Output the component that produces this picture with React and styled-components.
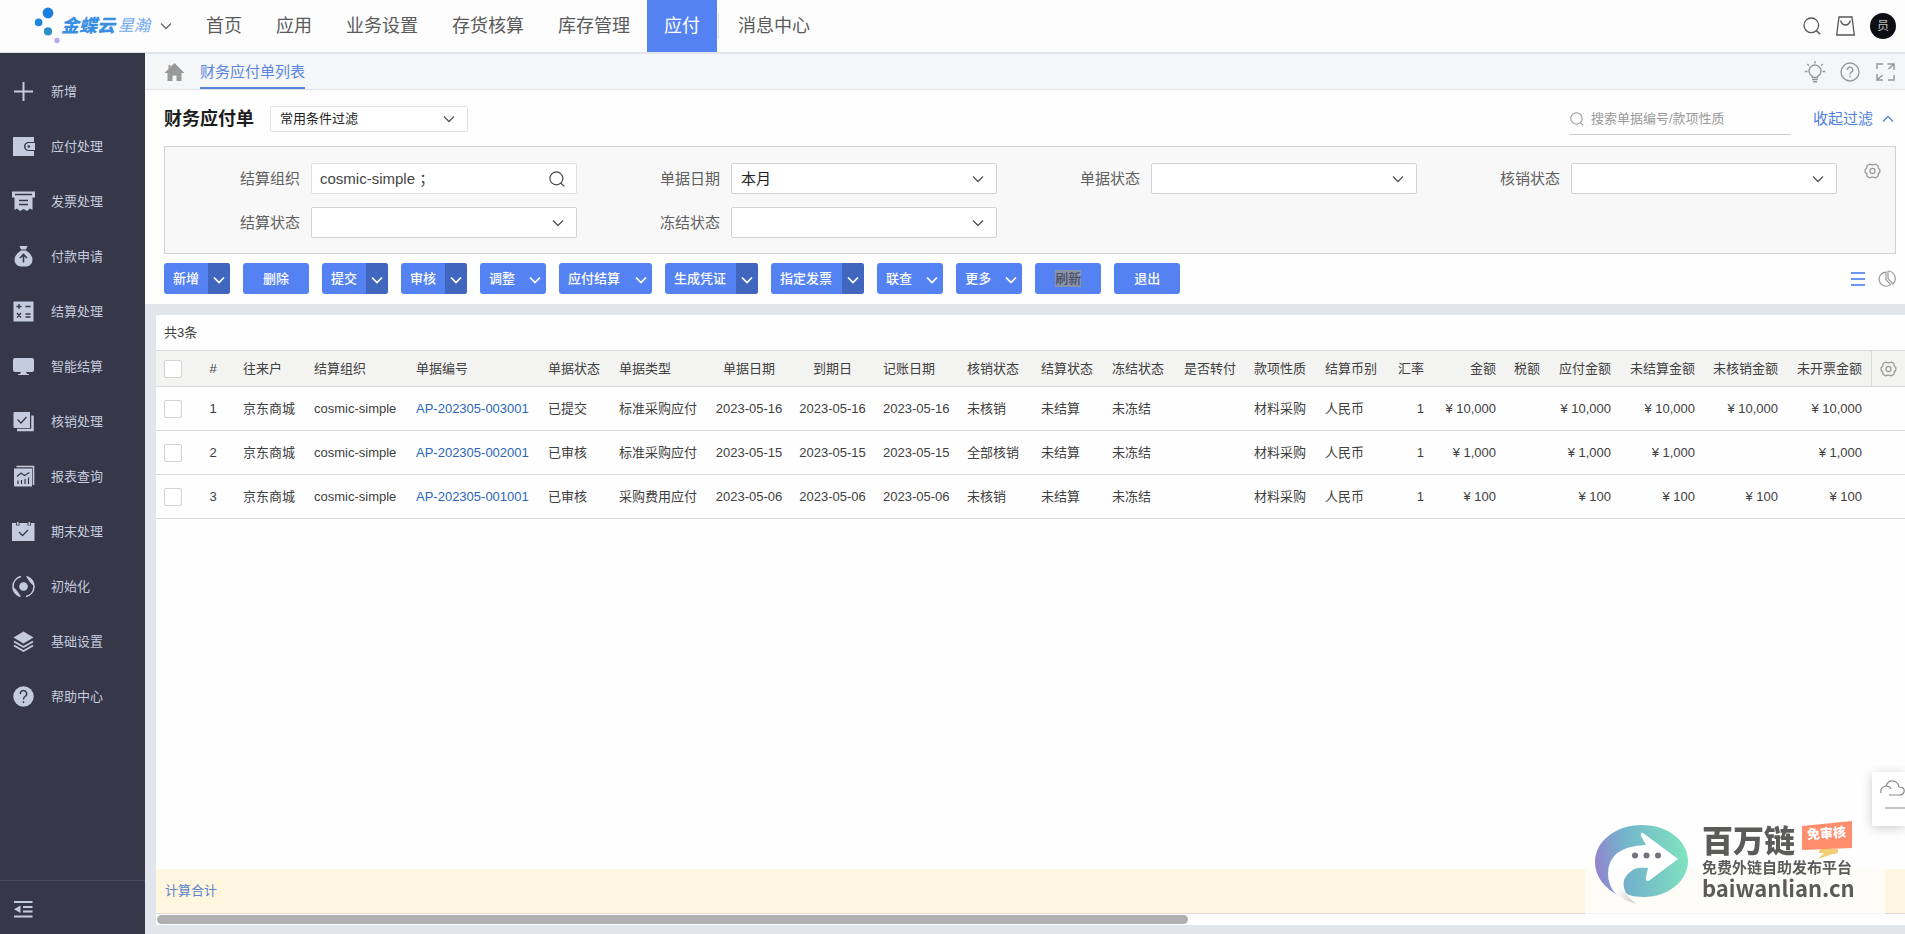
import React, { useState } from "react";
import styled, { createGlobalStyle } from "styled-components";

const GlobalStyle = createGlobalStyle`
  * { box-sizing: border-box; }
  body {
    margin: 0;
    background: #e1e5ec;
    color: #404040;
    font-family: "Liberation Sans", "Noto Sans CJK SC", sans-serif;
    font-size: 13px;
    line-height: 20px;
  }
  button, input, select { font: inherit; color: inherit; }
`

const Page = styled.div`
  display: flex;
  flex-direction: column;
  height: 100vh;
  overflow: hidden;
`

/* ---------- top header ---------- */
const Header = styled.header`
  flex: none;
  display: flex;
  align-items: center;
  justify-content: space-between;
  height: 53px;
  padding: 0 9px 0 34px;
  background: #fdfdfe;
  border-bottom: 1px solid #dfe2e8;
`

const HeaderLeft = styled.div`
  display: flex;
  align-items: center;
  height: 52px;
`

const Brand = styled.button`
  display: flex;
  align-items: center;
  width: 155px;
  padding: 0;
  border: 0;
  background: none;
  color: #666;
  cursor: pointer;
`

const BrandName = styled.span`
  margin: 0 3px 0 1px;
  color: #3a8fe3;
  font-size: 18px;
  font-weight: 900;
  font-style: italic;
  line-height: 24px;
`

const BrandSeries = styled.span`
  margin-right: 10px;
  color: #72a8ee;
  font-size: 16px;
  font-style: italic;
  line-height: 24px;
`

const Nav = styled.nav`
  display: flex;
  align-items: center;
`

const NavLink = styled.a`
  height: 52px;
  padding: 0 17px;
  background: ${({$active}) => $active ? '#5582f3' : 'transparent'};
  color: ${({$active}) => $active ? '#fff' : '#5a5a5a'};
  font-size: 18px;
  line-height: 52px;
  text-decoration: none;
`

const NavDivider = styled.span`
  width: 1px;
  height: 26px;
  margin: 0 2px 0 1px;
  background: #dcdfe4;
`

const HeaderTools = styled.div`
  display: flex;
  align-items: center;
  gap: 15px;
  color: #555;
`

const IconBtn = styled.button`
  display: flex;
  align-items: center;
  justify-content: center;
  padding: 0;
  border: 0;
  background: none;
  cursor: pointer;
`

const Avatar = styled.button`
  width: 26px;
  height: 26px;
  padding: 0;
  border: 0;
  border-radius: 50%;
  background: #0e0f14;
  color: #c4c4c4;
  font-size: 12px;
  line-height: 26px;
`

/* ---------- sidebar ---------- */
const Body = styled.div`
  flex: 1;
  display: flex;
  min-height: 0;
`

const Sidebar = styled.aside`
  flex: none;
  display: flex;
  flex-direction: column;
  width: 145px;
  background: #363849;
`

const Menu = styled.ul`
  flex: 1;
  margin: 0;
  padding: 11px 0 0;
  list-style: none;
`

const MenuLink = styled.a`
  display: flex;
  align-items: center;
  gap: 16px;
  height: 55px;
  padding-left: 12px;
  color: #c5cbde;
  text-decoration: none;
`

const Collapse = styled.button`
  display: flex;
  align-items: center;
  height: 54px;
  padding: 3px 0 0 12px;
  border: 0;
  border-top: 1px solid #4a4c5e;
  background: none;
  color: #c5cbde;
`

/* ---------- content ---------- */
const Content = styled.main`
  flex: 1;
  display: flex;
  flex-direction: column;
  min-width: 0;
`

const TabBar = styled.div`
  flex: none;
  display: flex;
  align-items: stretch;
  justify-content: space-between;
  height: 37px;
  padding: 0 9px 0 19px;
  background: #f5f6f8;
  border-top: 1px solid #e3e6eb;
  border-bottom: 1px solid #dfe2e6;
`

const Tabs = styled.div`
  display: flex;
  align-items: stretch;
  gap: 15px;
  color: #999;
`

const Tab = styled.a`
  border-bottom: 2px solid #5582e0;
  color: #5a86dd;
  font-size: 15px;
  line-height: 36px;
  text-decoration: none;
`

const TabTools = styled.div`
  display: flex;
  align-items: center;
  gap: 14px;
  color: #999;
`

const Panel = styled.section`
  flex: none;
  padding: 16px 9px 10px 19px;
  background: #fefefe;
`

const TitleRow = styled.div`
  display: flex;
  align-items: center;
  height: 26px;
  margin-bottom: 14px;
`

const Title = styled.h1`
  margin: 0 16px 0 0;
  color: #1c1c1c;
  font-size: 18px;
  font-weight: 700;
`

const SelectBox = styled.div`
  flex: ${({$width}) => $width ? `0 0 ${$width}px` : 1};
  display: grid;
  align-items: center;
  height: ${({$height}) => $height}px;
  border: 1px solid ${({$light}) => $light ? '#dfe1e4' : '#d0d3d7'};
  border-radius: 2px;
  background: #fff;
  color: #222;
  font-size: ${({$light}) => $light ? 13 : 15}px;

  select, svg { grid-area: 1 / 1; }
  select {
    width: 100%;
    height: 100%;
    padding: 0 30px 0 9px;
    border: 0;
    background: none;
    appearance: none;
  }
  svg {
    justify-self: end;
    margin-right: 12px;
    color: #555;
    pointer-events: none;
  }
`

const SearchBox = styled.div`
  display: flex;
  align-items: center;
  gap: 7px;
  width: 222px;
  height: 31px;
  margin: 0 22px 0 auto;
  padding-left: 1px;
  border-bottom: 1px solid #d0d0d0;
  color: #999;

  input {
    flex: 1;
    min-width: 0;
    padding: 0;
    border: 0;
    outline: 0;
    background: none;
  }
  input::placeholder { color: #9a9a9a; opacity: 1; }
`

const FoldBtn = styled(IconBtn)`
  gap: 9px;
  padding-right: 2px;
  color: #4f7fdc;
  font-size: 15px;
`

const FilterPanel = styled.div`
  display: flex;
  align-items: flex-start;
  gap: 27px;
  margin-bottom: 9px;
  padding: 16px 14px 15px 75px;
  border: 1px solid #d0d3d6;
  background: #f8f8f8;
`

const FilterGrid = styled.div`
  flex: 1;
  display: grid;
  grid-template-columns: repeat(4, 1fr);
  gap: 13px 83px;
`

const Field = styled.div`
  display: flex;
  align-items: center;
  gap: 11px;

  label {
    color: #606060;
    font-size: 15px;
  }
`

const TextBox = styled.div`
  flex: 1;
  display: flex;
  align-items: center;
  height: 31px;
  padding: 0 11px 0 8px;
  border: 1px solid #dcdee1;
  border-radius: 2px;
  background: #fff;
  color: #444;
  font-size: 15px;

  input {
    flex: 1;
    min-width: 0;
    padding: 0;
    border: 0;
    outline: 0;
    background: none;
  }
`

const SettingBtn = styled(IconBtn)`
  width: ${({$fill}) => $fill ? '100%' : 'auto'};
  color: #999;
`

const Toolbar = styled.div`
  display: flex;
  align-items: center;
  gap: 13px;
`

const ActionBtn = styled.button`
  display: flex;
  align-items: stretch;
  justify-content: center;
  min-width: 66px;
  height: 31px;
  padding: 0;
  overflow: hidden;
  border: 0;
  border-radius: 3px;
  background: #5582f3;
  color: #fff;
  font-weight: 500;
  line-height: 32px;
  cursor: pointer;
`

const ActionText = styled.span`
  flex: 1;
  padding: 0 ${({$long}) => $long ? 10 : 9}px 0 9px;
  white-space: nowrap;
`

const SelectedText = styled.span`
  padding: 1px 0;
  background: #8b93a6;
  color: #474d6b;
`

const ActionArrow = styled.span`
  flex: none;
  display: flex;
  align-items: center;
  justify-content: center;
  width: 22px;
  padding-top: 2px;
  background: ${({$split}) => $split ? '#4166be' : 'transparent'};
`

const ViewSwitch = styled.div`
  display: flex;
  align-items: center;
  gap: 12px;
  margin-left: auto;
  color: #999;
`

/* ---------- list ---------- */
const ListPanel = styled.section`
  flex: 1;
  display: flex;
  flex-direction: column;
  min-height: 0;
  margin: 11px 0 9px 11px;
  background: #fefefe;
`

const Count = styled.div`
  padding: 0 8px;
  line-height: 35px;
`

const Table = styled.table`
  width: 100%;
  table-layout: fixed;
  border-collapse: separate;
  border-spacing: 0;
`

const HeadCell = styled.th`
  height: 37px;
  padding: 0 ${({$tight}) => $tight ? 0 : 9}px;
  border: solid #d9dadb;
  border-width: 1px 0 1px ${({$divided}) => $divided ? 1 : 0}px;
  background: #f3f3f1;
  font-weight: 400;
  text-align: ${({$align}) => $align || 'left'};
  white-space: nowrap;
`

const Cell = styled.td`
  height: 44px;
  padding: 0 ${({$tight}) => $tight ? 0 : 9}px;
  border-bottom: 1px solid #d9dadb;
  text-align: ${({$align}) => $align || 'left'};
  white-space: nowrap;

  a { color: #2b66ba; text-decoration: none; }
`

const Check = styled.input`
  display: block;
  width: 18px;
  height: 18px;
  margin: 0 0 0 8px;
  border: 1px solid #d2d3d4;
  border-radius: 2px;
  background: #fff;
  appearance: none;

  &:checked { background: #5582f3; border-color: #5582f3; }
`

const TotalRow = styled.div`
  height: 45px;
  margin-top: auto;
  padding: 0 9px;
  border-bottom: 1px solid #dcdcdc;
  background: #fef6de;
  line-height: 43px;

  a { color: #5b82cc; text-decoration: none; }
`

const ScrollTrack = styled.div`
  height: 11px;
  padding: 1px;
`

const ScrollThumb = styled.div`
  width: 59%;
  height: 9px;
  border-radius: 5px;
  background: #b0b0b0;
`

/* ---------- floating parts ---------- */
const CloudDock = styled.button`
  position: fixed;
  right: 0;
  bottom: 108px;
  width: 33px;
  height: 54px;
  padding: 0 0 0 8px;
  overflow: hidden;
  border: 0;
  background: #fff;
  box-shadow: 0 2px 10px rgba(0, 0, 0, 0.2);
  color: #888;
`

const Promo = styled.a`
  position: fixed;
  right: 20px;
  bottom: 20px;
  display: flex;
  gap: 13px;
  width: 300px;
  height: 100px;
  padding: 10px 0 0 10px;
  background: rgba(254, 254, 254, 0.75);
  color: #5b5b59;
  text-decoration: none;
`

const PromoText = styled.div`
  display: flex;
  flex-direction: column;
  font-weight: 900;
`

const PromoName = styled.div`
  display: flex;
  gap: 7px;
  font-size: 31px;
  line-height: 36px;
`

const PromoTag = styled.span`
  position: relative;
  width: 50px;
  height: 36px;

  svg { position: absolute; top: -4px; left: 0; }
  span {
    position: absolute;
    top: 2px;
    left: 5px;
    color: #fff;
    font-size: 13px;
    line-height: 16px;
    transform: rotate(-4deg);
  }
`

const PromoSlogan = styled.div`
  font-size: 15px;
  font-weight: 700;
  line-height: 16px;
`

const PromoSite = styled.div`
  font-family: "Noto Sans CJK SC", sans-serif;
  font-size: 22px;
  font-weight: 700;
  line-height: 22px;
`

/* ---------- icons ---------- */
function Chevron({size = 12, up, width = 1.3}){
  return(
    <svg width={size} height={size} viewBox="0 0 12 12" fill="none" stroke="currentColor" strokeWidth={width}>
      <path d={up ? "M1 8.5L6 3.5L11 8.5" : "M1 3.5L6 8.5L11 3.5"}/>
    </svg>
  )
}

function SearchIcon({size}){
  return(
    <svg width={size} height={size} viewBox="0 0 18 18" fill="none" stroke="currentColor" strokeWidth="1.3">
      <circle cx="8.3" cy="8.3" r="7.3"/>
      <path d="M13 13.5L17.3 17.3"/>
    </svg>
  )
}

function GearIcon(){
  return(
    <svg width="17" height="16" viewBox="0 0 17 17" fill="none" stroke="currentColor" strokeWidth="1.3" strokeLinejoin="round">
      <path d="M5.2 1.2Q8.5 2.6 11.8 1.2L14.4 3Q14 5.8 16.3 7V10Q14 11.2 14.4 14L11.8 15.8Q8.5 14.4 5.2 15.8L2.6 14Q3 11.2 .7 10V7Q3 5.8 2.6 3Z"/>
      <circle cx="8.5" cy="8.5" r="2.7"/>
    </svg>
  )
}

function BrandDots(){
  return(
    <svg width="26" height="40" viewBox="0 0 26 40">
      <circle cx="14" cy="7" r="5.4" fill="#1b7fe2"/>
      <circle cx="4.6" cy="16.4" r="3.8" fill="#1c86da"/>
      <circle cx="14" cy="25.4" r="4.1" fill="#2c90c4"/>
      <circle cx="23" cy="34.5" r="2.7" fill="#b5a9e8"/>
    </svg>
  )
}

const dark = "#363849"

const menuIcons = {
  plus: <path d="M11.5 2V21M2 11.5H21" stroke="currentColor" strokeWidth="2"/>,
  wallet: <>
    <path d="M1 2H22V7H16.5A4.5 4.5 0 0 0 16.5 16H22V21H1Z" fill="currentColor"/>
    <path d="M17 8H23V15H17A3.5 3.5 0 0 1 17 8Z" fill="currentColor"/>
    <circle cx="16.8" cy="11.5" r="1.3" fill={dark}/>
  </>,
  invoice: <>
    <path d="M0 1.5H23V7.5H20.5V20L18 18.5L15 21L11.5 19L8 21L5 18.5L2.5 20V7.5H0Z" fill="currentColor"/>
    <path d="M3 4.5H20M7 10.5H16M7 14.5H16" stroke={dark} strokeWidth="1.3"/>
  </>,
  bag: <>
    <path d="M7.5 1H15.5L14 4.5H9ZM9 5.5H14Q20 9 20.5 14.5Q20.5 20.5 14.5 21.5H8.5Q2.5 20.5 2.5 14.5Q3 9 9 5.5Z" fill="currentColor"/>
    <path d="M11.5 17.5V9.8M8 13L11.5 9.5L15 13" stroke={dark} strokeWidth="1.6" fill="none"/>
  </>,
  calc: <>
    <path d="M1.5 1.5H21.5V21.5H1.5Z" fill="currentColor"/>
    <path d="M4.5 6.5H9.5M7 4V9M13.5 6.5H18.5M5 13L9 17.5M9 13L5 17.5M13.5 14H18.5M13.5 17H18.5" stroke={dark} strokeWidth="1.3"/>
  </>,
  monitor: <path d="M3 3H20A2 2 0 0 1 22 5V15A2 2 0 0 1 20 17H14L15 19H17V20H6V19H8L9 17H3A2 2 0 0 1 1 15V5A2 2 0 0 1 3 3Z" fill="currentColor"/>,
  verify: <>
    <path d="M2.5 2H18V18H2.5A1 1 0 0 1 1.5 17V3A1 1 0 0 1 2.5 2Z" fill="currentColor"/>
    <path d="M5 20H20.5V5.5" stroke="currentColor" strokeWidth="2.5" fill="none"/>
    <path d="M5.5 9.5L9 13L14.5 7" stroke={dark} strokeWidth="1.3" fill="none"/>
  </>,
  report: <>
    <path d="M4.5 1.5H21.5V20" stroke="currentColor" strokeWidth="1.6" fill="none"/>
    <path d="M2 3.5H20V21.5H3A1 1 0 0 1 2 20.5Z" fill="currentColor"/>
    <path d="M5 11.5L9 8L12.5 10.5L17.5 7.5M6 19V15.5M9.5 19V15M13 19V14M16.5 19V12.5" stroke={dark} strokeWidth="1.2" fill="none"/>
  </>,
  calendar: <>
    <path d="M0 3H4V5.5H7.5V3H15.5V5.5H19V3H22.5V21H0Z" fill="currentColor"/>
    <path d="M5.7 2V5M17.3 2V5" stroke="currentColor" strokeWidth="1.6"/>
    <path d="M7 12L10.5 15.5L16 10" stroke={dark} strokeWidth="1.3" fill="none"/>
  </>,
  init: <>
    <circle cx="11.5" cy="11.5" r="4.3" fill="currentColor"/>
    <path d="M9 1.5A10.3 10.3 0 0 0 8 21.3M14 21.5A10.3 10.3 0 0 0 15 1.7" stroke="currentColor" strokeWidth="1.6" fill="none"/>
    <path d="M1 12Q5 14.5 9 22Q2 20 1 12ZM22 11Q18 8.5 14 1Q21 3 22 11Z" fill="currentColor"/>
  </>,
  layers: <>
    <path d="M11.5 1.5L21.5 7.5L11.5 13.5L1.5 7.5Z" fill="currentColor"/>
    <path d="M2 11.5L11.5 17L21 11.5M2 15.5L11.5 21L21 15.5" stroke="currentColor" strokeWidth="1.8" fill="none"/>
  </>,
  help: <>
    <circle cx="11.5" cy="11.5" r="10.2" fill="currentColor"/>
    <path d="M8.3 9A3.2 3.2 0 1 1 13 11.5Q11.5 12.5 11.5 14.5M11.5 16.3V18" stroke={dark} strokeWidth="1.4" fill="none"/>
  </>,
  fold: <>
    <path d="M2 4H20.5M11 9H20.5M11 13.5H20.5M2 18.5H20.5" stroke="currentColor" strokeWidth="1.8"/>
    <path d="M2 11.3L8.5 7.5V15Z" fill="currentColor"/>
  </>,
}

function MenuIcon({name}){
  return <svg width="23" height="23" viewBox="0 0 23 23" fill="none">{menuIcons[name]}</svg>
}

/* ---------- data ---------- */
const navs = ["首页", "应用", "业务设置", "存货核算", "库存管理", "应付"]

const menus = [
  {icon: "plus", label: "新增"},
  {icon: "wallet", label: "应付处理"},
  {icon: "invoice", label: "发票处理"},
  {icon: "bag", label: "付款申请"},
  {icon: "calc", label: "结算处理"},
  {icon: "monitor", label: "智能结算"},
  {icon: "verify", label: "核销处理"},
  {icon: "report", label: "报表查询"},
  {icon: "calendar", label: "期末处理"},
  {icon: "init", label: "初始化"},
  {icon: "layers", label: "基础设置"},
  {icon: "help", label: "帮助中心"},
]

const filters = [
  {id: "org", label: "结算组织", text: "cosmic-simple ；"},
  {id: "date", label: "单据日期", value: "本月"},
  {id: "billStatus", label: "单据状态", value: ""},
  {id: "verifyStatus", label: "核销状态", value: ""},
  {id: "settleStatus", label: "结算状态", value: ""},
  {id: "freezeStatus", label: "冻结状态", value: ""},
]

const actions = [
  {label: "新增", arrow: true, split: true},
  {label: "删除"},
  {label: "提交", arrow: true, split: true},
  {label: "审核", arrow: true, split: true},
  {label: "调整", arrow: true},
  {label: "应付结算", arrow: true},
  {label: "生成凭证", arrow: true, split: true},
  {label: "指定发票", arrow: true, split: true},
  {label: "联查", arrow: true},
  {label: "更多", arrow: true},
  {label: "刷新", selected: true},
  {label: "退出"},
]

const columns = [
  {title: "#", width: 42, align: "center"},
  {title: "往来户", width: 71},
  {title: "结算组织", width: 102},
  {title: "单据编号", width: 132, link: true},
  {title: "单据状态", width: 71},
  {title: "单据类型", width: 97},
  {title: "单据日期", width: 84, align: "center", tight: true},
  {title: "到期日", width: 83, align: "center", tight: true},
  {title: "记账日期", width: 84},
  {title: "核销状态", width: 74},
  {title: "结算状态", width: 71},
  {title: "冻结状态", width: 72},
  {title: "是否转付", width: 70},
  {title: "款项性质", width: 71},
  {title: "结算币别", width: 71},
  {title: "汇率", width: 46, align: "right"},
  {title: "金额", width: 72, align: "right"},
  {title: "税额", width: 44, align: "right"},
  {title: "应付金额", width: 71, align: "right"},
  {title: "未结算金额", width: 84, align: "right"},
  {title: "未核销金额", width: 83, align: "right"},
  {title: "未开票金额", width: 84, align: "right"},
]

const rows = [
  ["1", "京东商城", "cosmic-simple", "AP-202305-003001", "已提交", "标准采购应付", "2023-05-16", "2023-05-16", "2023-05-16", "未核销", "未结算", "未冻结", "", "材料采购", "人民币", "1", "¥ 10,000", "", "¥ 10,000", "¥ 10,000", "¥ 10,000", "¥ 10,000"],
  ["2", "京东商城", "cosmic-simple", "AP-202305-002001", "已审核", "标准采购应付", "2023-05-15", "2023-05-15", "2023-05-15", "全部核销", "未结算", "未冻结", "", "材料采购", "人民币", "1", "¥ 1,000", "", "¥ 1,000", "¥ 1,000", "", "¥ 1,000"],
  ["3", "京东商城", "cosmic-simple", "AP-202305-001001", "已审核", "采购费用应付", "2023-05-06", "2023-05-06", "2023-05-06", "未核销", "未结算", "未冻结", "", "材料采购", "人民币", "1", "¥ 100", "", "¥ 100", "¥ 100", "¥ 100", "¥ 100"],
]

/* ---------- sections ---------- */
function TopHeader(){
  return(
    <Header>
      <HeaderLeft>
        <Brand type="button">
          <BrandDots/>
          <BrandName>金蝶云</BrandName>
          <BrandSeries>星瀚</BrandSeries>
          <Chevron/>
        </Brand>
        <Nav>
          {navs.map(nav => <NavLink key={nav} href="#" $active={nav === "应付"}>{nav}</NavLink>)}
          <NavDivider/>
          <NavLink href="#">消息中心</NavLink>
        </Nav>
      </HeaderLeft>
      <HeaderTools>
        <IconBtn type="button" aria-label="搜索"><SearchIcon size={18}/></IconBtn>
        <IconBtn type="button" aria-label="应用市场">
          <svg width="19" height="20" viewBox="0 0 19 20" fill="none" stroke="currentColor" strokeWidth="1.3">
            <path d="M3 1H16L18.3 19H.7ZM4.5 4.5Q6 9 9.5 9Q13 9 14.5 4.5"/>
          </svg>
        </IconBtn>
        <Avatar type="button">员</Avatar>
      </HeaderTools>
    </Header>
  )
}

function SideMenu(){
  return(
    <Sidebar>
      <Menu>
        {menus.map(menu => (
          <li key={menu.label}>
            <MenuLink href="#"><MenuIcon name={menu.icon}/>{menu.label}</MenuLink>
          </li>
        ))}
      </Menu>
      <Collapse type="button" aria-label="收起菜单"><MenuIcon name="fold"/></Collapse>
    </Sidebar>
  )
}

function PageTabs(){
  return(
    <TabBar>
      <Tabs>
        <IconBtn type="button" aria-label="主页">
          <svg width="21" height="20" viewBox="0 0 21 20" fill="#999">
            <path d="M10.5 1L20.5 11H17.5V19H12.5V13.5H8.5V19H3.5V11H.5L4.5 7V3H6.5V5Z"/>
          </svg>
        </IconBtn>
        <Tab href="#">财务应付单列表</Tab>
      </Tabs>
      <TabTools>
        <IconBtn type="button" aria-label="提示">
          <svg width="22" height="22" viewBox="0 0 22 22" fill="none" stroke="#999" strokeWidth="1.4">
            <path d="M8.5 16.5V15.5A6 6 0 1 1 13.5 15.5V16.5ZM8 18.5H14M9 20.7H13M11 0V2.5M.7 10.5H3.5M18.5 10.5H21.3M3.3 3L5 4.7M18.7 3L17 4.7"/>
          </svg>
        </IconBtn>
        <IconBtn type="button" aria-label="帮助">
          <svg width="20" height="20" viewBox="0 0 20 20" fill="none" stroke="#999" strokeWidth="1.4">
            <circle cx="10" cy="10" r="9"/>
            <path d="M7.3 8A2.7 2.7 0 1 1 11.3 10.2Q10 11 10 12.5M10 13.8V15.3"/>
          </svg>
        </IconBtn>
        <IconBtn type="button" aria-label="全屏">
          <svg width="22" height="20" viewBox="0 0 22 20" fill="none" stroke="#999" strokeWidth="1.5">
            <path d="M3 7V2H9M13.5 2H20V8M20 2L14.5 7M20 13V18H14M3 12V18H9M3 18L8.5 13"/>
          </svg>
        </IconBtn>
      </TabTools>
    </TabBar>
  )
}

function FilterField({filter}){
  return(
    <Field>
      <label htmlFor={filter.id}>{filter.label}</label>
      {filter.text ? (
        <TextBox>
          <input id={filter.id} defaultValue={filter.text}/>
          <IconBtn type="button" aria-label="选择组织"><SearchIcon size={16}/></IconBtn>
        </TextBox>
      ) : (
        <SelectBox $height={31}>
          <select id={filter.id} defaultValue={filter.value}><option>{filter.value}</option></select>
          <Chevron/>
        </SelectBox>
      )}
    </Field>
  )
}

function FilterArea(){
  return(
    <Panel>
      <TitleRow>
        <Title>财务应付单</Title>
        <SelectBox $width={198} $height={26} $light>
          <select aria-label="过滤方案"><option>常用条件过滤</option></select>
          <Chevron/>
        </SelectBox>
        <SearchBox>
          <SearchIcon size={14}/>
          <input aria-label="搜索" placeholder="搜索单据编号/款项性质"/>
        </SearchBox>
        <FoldBtn type="button">收起过滤<Chevron up/></FoldBtn>
      </TitleRow>
      <FilterPanel>
        <FilterGrid>
          {filters.map(filter => <FilterField key={filter.id} filter={filter}/>)}
        </FilterGrid>
        <SettingBtn type="button" aria-label="过滤设置"><GearIcon/></SettingBtn>
      </FilterPanel>
      <Toolbar>
        {actions.map(action => (
          <ActionBtn key={action.label} type="button">
            <ActionText $long={action.label.length > 2}>
              {action.selected ? <SelectedText>{action.label}</SelectedText> : action.label}
            </ActionText>
            {action.arrow && <ActionArrow $split={action.split}><Chevron width={1.7}/></ActionArrow>}
          </ActionBtn>
        ))}
        <ViewSwitch>
          <IconBtn type="button" aria-label="列表视图">
            <svg width="16" height="16" viewBox="0 0 16 16" stroke="#6d97ee" strokeWidth="2">
              <path d="M1 2H15M1 8H15M1 14H15"/>
            </svg>
          </IconBtn>
          <IconBtn type="button" aria-label="图表视图">
            <svg width="18" height="18" viewBox="0 0 18 18" fill="none" stroke="#999" strokeWidth="1.2" strokeLinejoin="round">
              <path d="M8 2.2A7 7 0 1 0 12.6 14.6L8 9.6ZM10 1V8.6L15 14A7.6 7.6 0 0 0 10 1Z"/>
            </svg>
          </IconBtn>
        </ViewSwitch>
      </Toolbar>
    </Panel>
  )
}

function BillTable(){
  const [checked, setChecked] = useState([])
  const allChecked = checked.length === rows.length

  const toggle = (id) => {
    setChecked(checked.includes(id) ? checked.filter(v => v !== id) : [...checked, id])
  }

  return(
    <ListPanel>
      <Count>共3条</Count>
      <Table>
        <colgroup>
          <col style={{width: 36}}/>
          {columns.map(col => <col key={col.title} style={{width: col.width}}/>)}
          <col style={{width: 34}}/>
        </colgroup>
        <thead>
          <tr>
            <HeadCell $tight>
              <Check type="checkbox" aria-label="全选" checked={allChecked} onChange={() => setChecked(allChecked ? [] : rows.map(row => row[0]))}/>
            </HeadCell>
            {columns.map(col => <HeadCell key={col.title} $align={col.align} $tight={col.tight}>{col.title}</HeadCell>)}
            <HeadCell $tight $divided>
              <SettingBtn type="button" aria-label="列设置" $fill><GearIcon/></SettingBtn>
            </HeadCell>
          </tr>
        </thead>
        <tbody>
          {rows.map(row => (
            <tr key={row[0]}>
              <Cell $tight>
                <Check type="checkbox" aria-label={`选择第${row[0]}行`} checked={checked.includes(row[0])} onChange={() => toggle(row[0])}/>
              </Cell>
              {columns.map((col, i) => (
                <Cell key={col.title} $align={col.align} $tight={col.tight}>
                  {col.link ? <a href="#">{row[i]}</a> : row[i]}
                </Cell>
              ))}
              <Cell $tight/>
            </tr>
          ))}
        </tbody>
      </Table>
      <TotalRow><a href="#">计算合计</a></TotalRow>
      <ScrollTrack><ScrollThumb/></ScrollTrack>
    </ListPanel>
  )
}

function PromoCard(){
  return(
    <Promo href="#">
      <svg width="94" height="82" viewBox="0 0 94 82">
        <defs>
          <linearGradient id="ball" x1="0" y1="0.6" x2="1" y2="0.5">
            <stop offset="0" stopColor="#9483cf"/>
            <stop offset="0.35" stopColor="#73b4cb"/>
            <stop offset="1" stopColor="#7fe3bf"/>
          </linearGradient>
          <linearGradient id="tail" x1="0" y1="0" x2="1" y2="1">
            <stop offset="0.4" stopColor="#fdfdfb"/>
            <stop offset="1" stopColor="#b9b9b4"/>
          </linearGradient>
        </defs>
        <path d="M47 1C73 1 93 17 93 37C93 57 73 73 49 73C42 73 35 72 30 69L26 73C10 65 0 53 0 38C0 17 21 1 47 1Z" fill="url(#ball)"/>
        <path d="M48 9L83 35L55 56Q50 59 51 53L53 44Q36 41 29 56Q26 69 42 80Q13 74 13 49Q14 22 51 21L46 12Q45 8 48 9Z" fill="#fff"/>
        <path d="M53 44Q31 40 27 57Q27 70 42 80Q20 75 16 58Q17 44 36 42Q45 41 53 44Z" fill="url(#tail)"/>
        <circle cx="40" cy="31.5" r="3" fill="#70737c"/>
        <circle cx="51.5" cy="31.5" r="3" fill="#70737c"/>
        <circle cx="63" cy="31.5" r="3" fill="#70737c"/>
      </svg>
      <PromoText>
        <PromoName>
          百万链
          <PromoTag>
            <svg width="50" height="40" viewBox="0 0 50 40">
              <path d="M18 29H36V33L29 34.5L16 39L22 33H17Z" fill="#f3cf73"/>
              <path d="M0 6L50 1V28L0 30Z" fill="#ff8e6f"/>
            </svg>
            <span>免审核</span>
          </PromoTag>
        </PromoName>
        <PromoSlogan>免费外链自助发布平台</PromoSlogan>
        <PromoSite>baiwanlian.cn</PromoSite>
      </PromoText>
    </Promo>
  )
}

function App(){
  return(
    <>
      <GlobalStyle/>
      <Page>
        <TopHeader/>
        <Body>
          <SideMenu/>
          <Content>
            <PageTabs/>
            <FilterArea/>
            <BillTable/>
          </Content>
        </Body>
      </Page>
      <PromoCard/>
      <CloudDock type="button" aria-label="云服务">
        <svg width="32" height="34" viewBox="0 0 32 34" fill="none" stroke="currentColor" strokeWidth="1.2">
          <path d="M1 14Q0 8 6 7Q8 1 13.5 2Q18 3 19 8Q25 8 24 13Q23 16 20 16H9M6 7Q10 7 11 10M5 29H26"/>
        </svg>
      </CloudDock>
    </>
  )
}

export default App
